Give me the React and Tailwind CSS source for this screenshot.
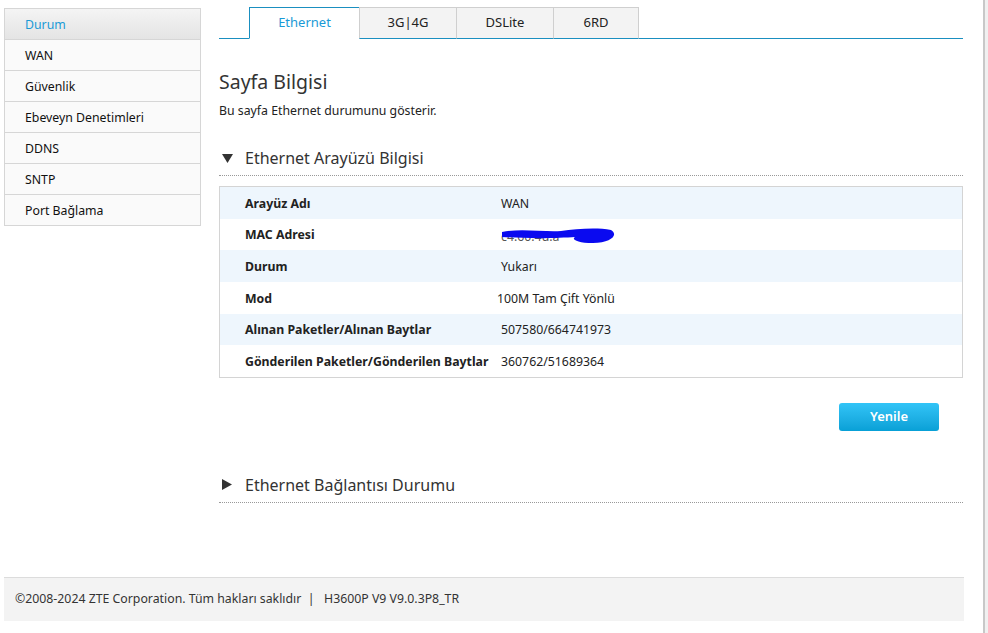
import React from "react";

const menu = ["Durum", "WAN", "Güvenlik", "Ebeveyn Denetimleri", "DDNS", "SNTP", "Port Bağlama"];

const tabs = [
  { label: "Ethernet", w: "w-[111px]" },
  { label: "3G|4G", w: "w-[98px]" },
  { label: "DSLite", w: "w-[98px]" },
  { label: "6RD", w: "w-[86px]" },
];

const rows = [
  ["Arayüz Adı", "WAN"],
  ["MAC Adresi", "mac"],
  ["Durum", "Yukarı"],
  ["Mod", "100M Tam Çift Yönlü"],
  ["Alınan Paketler/Alınan Baytlar", "507580/664741973"],
  ["Gönderilen Paketler/Gönderilen Baytlar", "360762/51689364"],
];

const Scribble = () => (
  <span className="relative inline-block w-[120px] h-[16px] align-middle">
    <span className="absolute left-0 top-0 text-[#555]">c4:60:4d:a</span>
    <svg className="absolute left-0 top-[-3px]" width="116" height="22" viewBox="0 0 116 22">
      <path
        d="M1 7 C 20 3, 40 7, 60 6 C 75 4, 95 2, 110 5 C 118 10, 110 18, 92 18 C 76 18, 70 14, 74 12 C 60 13, 30 14, 1 12 Z"
        fill="#0a0af0"
      />
    </svg>
  </span>
);

const Down = () => (
  <svg width="11" height="10" viewBox="0 0 11 10" className="mr-[12px]">
    <path d="M0 1 L11 1 L5.5 10 Z" fill="#333" />
  </svg>
);

const Right = () => (
  <svg width="10" height="11" viewBox="0 0 10 11" className="mr-[13px]">
    <path d="M0 0 L10 5.5 L0 11 Z" fill="#333" />
  </svg>
);

export default function App() {
  return (
    <div
      className="relative w-[988px] h-[633px] bg-white text-[12.3px] text-[#222] overflow-hidden"
      style={{ fontFamily: '"Noto Sans", "Open Sans", sans-serif' }}
    >
      <div className="flex pt-[8px] pl-[4px]">
        <div className="w-[197px] border border-[#d6d6d6] border-b-0 self-start">
          {menu.map((m, i) => (
            <div
              key={m}
              className={
                "h-[31px] flex items-center pl-[20px] pt-[2px] border-b border-[#d6d6d6] " +
                (i === 0 ? "bg-gradient-to-b from-[#f4f4f4] to-[#e4e4e4] text-[#1a9ad6]" : "bg-[#fafafa] text-[#111]")
              }
            >
              {m}
            </div>
          ))}
        </div>

        <div className="ml-[18px] w-[744px]">
          <div className="flex items-end h-[31px] border-b border-[#1a8fc0] pl-[30px]">
            {tabs.map((t, i) => (
              <div
                key={t.label}
                className={
                  t.w +
                  " h-[32px] -mb-px flex items-center justify-center text-[13px] " +
                  (i === 0
                    ? "bg-white border border-[#1a8fc0] border-b-white text-[#1a9ad6]"
                    : "bg-[#f3f3f3] border border-[#cfcfcf] border-b-[#1a8fc0] -ml-px text-[#222]")
                }
              >
                {t.label}
              </div>
            ))}
          </div>

          <div className="mt-[30px] text-[19.5px] text-[#333] leading-[26px]">Sayfa Bilgisi</div>
          <div className="mt-[7px] leading-[18px]">Bu sayfa Ethernet durumunu gösterir.</div>

          <div className="mt-[26px] flex items-center h-[24px] pl-[3px] text-[16px] text-[#333]">
            <Down />
            Ethernet Arayüzü Bilgisi
          </div>
          <div className="mt-[5px] border-b border-dotted border-[#999]"></div>

          <div className="mt-[10px] border border-[#d4d4d4]">
            {rows.map(([k, v], i) => (
              <div key={k} className={"flex items-center pt-[2px] h-[31.67px] " + (i % 2 === 0 ? "bg-[#eef6fd]" : "bg-white")}>
                <div className="w-[281px] pl-[25px] font-bold text-[#222] whitespace-nowrap">{k}</div>
                <div className={i === 3 ? "-ml-[4px]" : ""}>{v === "mac" ? <Scribble /> : v}</div>
              </div>
            ))}
          </div>

          <div className="flex justify-end mt-[25px] pr-[24px]">
            <button className="w-[100px] h-[28px] rounded-[3px] bg-gradient-to-b from-[#31c4f7] to-[#07a0d6] text-white text-[13px] font-semibold">
              Yenile
            </button>
          </div>

          <div className="mt-[42px] flex items-center h-[24px] pl-[3px] text-[16px] text-[#333]">
            <Right />
            Ethernet Bağlantısı Durumu
          </div>
          <div className="mt-[5px] border-b border-dotted border-[#999]"></div>
        </div>
      </div>

      <div className="absolute left-[4px] top-[577px] w-[960px] h-[44px] bg-[#f3f3f3] border-t border-[#dcdcdc] flex items-center pl-[11px] text-[#333]">
        ©2008-2024 ZTE Corporation. Tüm hakları saklıdır&nbsp;&nbsp;|&nbsp;&nbsp;&nbsp;H3600P V9 V9.0.3P8_TR
      </div>

      <div className="absolute right-0 top-0 h-full w-[5px] bg-[#f0f0f0] border-l-2 border-[#c8c8c8]"></div>
    </div>
  );
}
